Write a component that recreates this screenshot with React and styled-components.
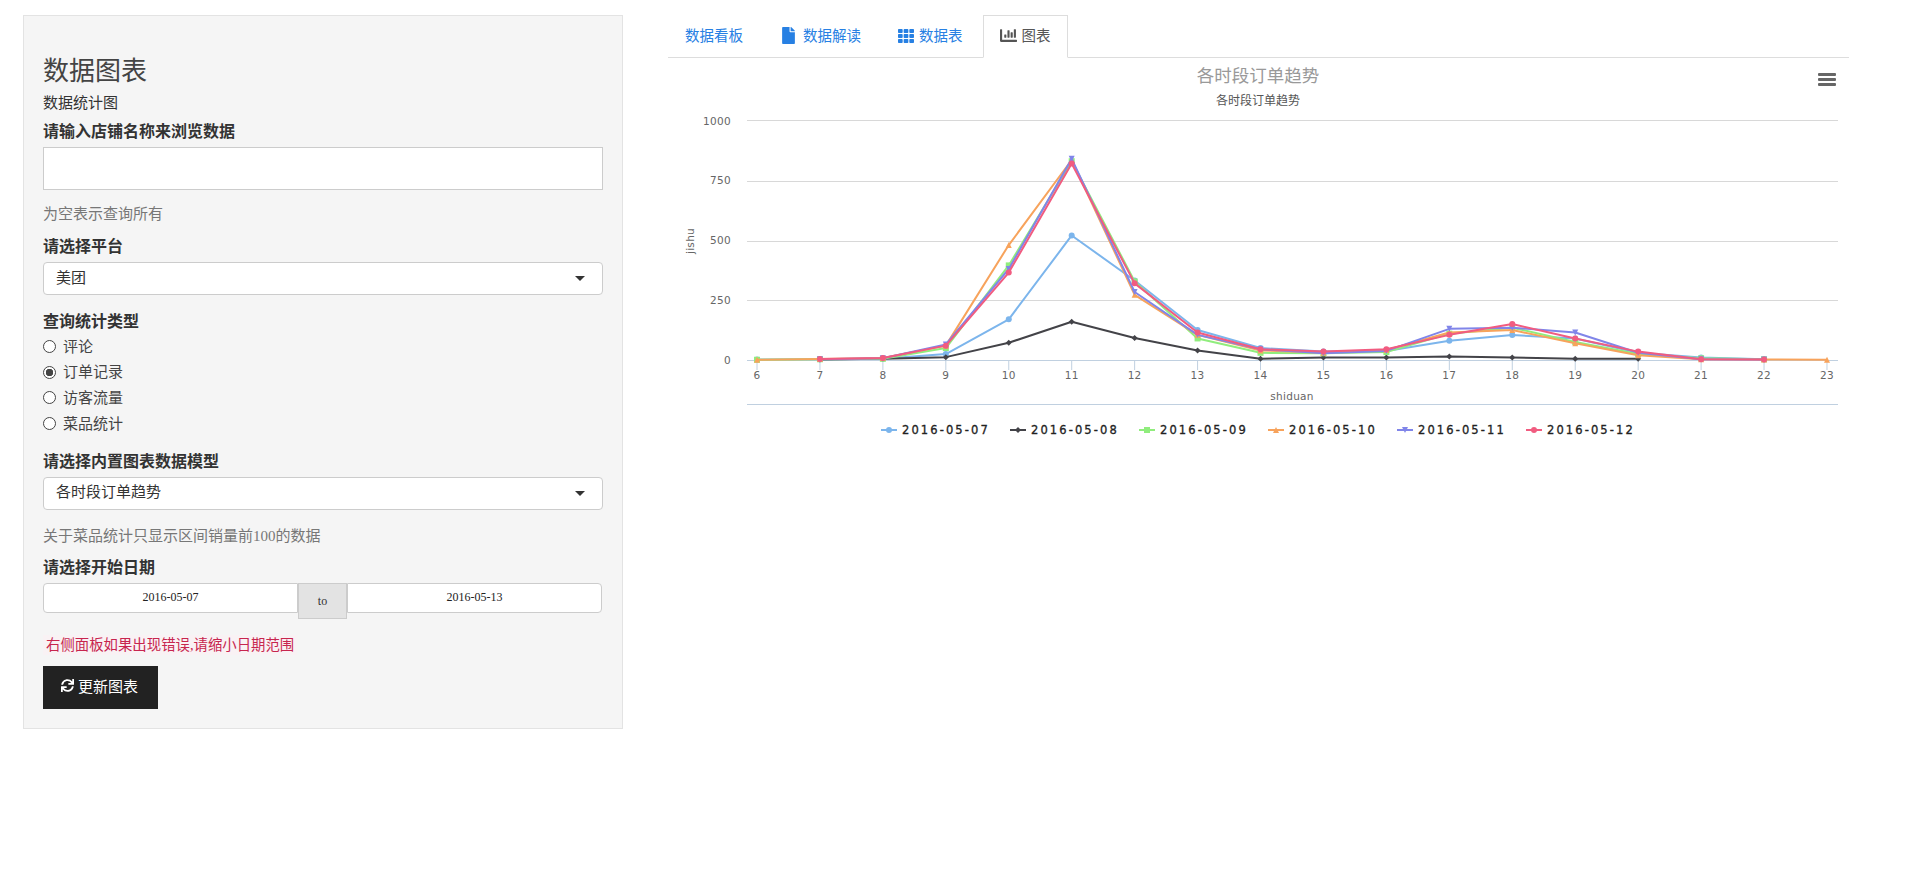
import React from "react"
import styled, { createGlobalStyle } from "styled-components"
import { FaFile, FaTh, FaChartBar, FaSync } from "react-icons/fa"

const GlobalStyle = createGlobalStyle`
  html, body {
    margin: 0;
    background: #fff;
  }
  body {
    font-family: "Liberation Serif", "Noto Sans CJK SC", serif;
    font-size: 15px;
    line-height: 20px;
    color: #333;
  }
`

const HOURS = [6, 7, 8, 9, 10, 11, 12, 13, 14, 15, 16, 17, 18, 19, 20, 21, 22, 23]

// values start at hour 6, a null means no order that hour
const SERIES = [
  {
    name: "2016-05-07",
    color: "#7cb5ec",
    marker: "circle",
    data: [2, 3, 5, 25, 170, 520, 332, 125, 50, 35, 38, 80, 104, 90, 30, 10, 3, null],
  },
  {
    name: "2016-05-08",
    color: "#434348",
    marker: "diamond",
    data: [null, 2, 5, 12, 72, 160, 92, 40, 5, 10, 10, 15, 10, 5, 5, null, null, null],
  },
  {
    name: "2016-05-09",
    color: "#90ed7d",
    marker: "square",
    data: [1, 3, 5, 50, 395, 830, 328, 90, 30, 28, 33, 110, 135, 75, 25, 7, 3, null],
  },
  {
    name: "2016-05-10",
    color: "#f7a35c",
    marker: "triangle",
    data: [1, 4, 8, 60, 480, 835, 272, 105, 40, 30, 42, 115, 125, 70, 20, 3, 2, 1],
  },
  {
    name: "2016-05-11",
    color: "#8085e9",
    marker: "triangle-down",
    data: [null, 3, 7, 65, 380, 840, 284, 105, 45, 28, 38, 130, 135, 115, 30, 3, 2, null],
  },
  {
    name: "2016-05-12",
    color: "#f15c80",
    marker: "circle",
    data: [null, 4, 8, 60, 365, 820, 320, 115, 45, 35, 45, 105, 150, 90, 35, 3, 2, null],
  },
]

const GRID = [
  { value: 1000, y: 120.5 },
  { value: 750, y: 181.5 },
  { value: 500, y: 241.5 },
  { value: 250, y: 300.5 },
  { value: 0, y: 360.5 },
]

const xOf = (i) => 757 + i * 62.94
const yOf = (v) => 360 - v * 0.2395

const Marker = ({ type, x, y, color }) => {
  if (type === "circle") return <circle cx={x} cy={y} r={3} fill={color} />
  if (type === "square") return <rect x={x - 3} y={y - 3} width={6} height={6} fill={color} />
  const points = {
    diamond: `${x},${y - 3} ${x + 3},${y} ${x},${y + 3} ${x - 3},${y}`,
    triangle: `${x},${y - 3} ${x + 3},${y + 3} ${x - 3},${y + 3}`,
    "triangle-down": `${x - 3},${y - 3} ${x + 3},${y - 3} ${x},${y + 3}`,
  }
  return <polygon points={points[type]} fill={color} />
}

const OrderChart = () => (
  <ChartSvg viewBox="668 58 1181 400" width="1181" height="400">
    <text x="1258" y="82" textAnchor="middle" fontSize="17.5" fill="#999" fontFamily='"Noto Sans CJK SC", sans-serif'>
      各时段订单趋势
    </text>
    <text x="1258" y="105" textAnchor="middle" fontSize="12" fill="#555" fontFamily='"Noto Sans CJK SC", sans-serif'>
      各时段订单趋势
    </text>
    <g fill="#666">
      <rect x="1818" y="73" width="18" height="3" rx="1" />
      <rect x="1818" y="78" width="18" height="3" rx="1" />
      <rect x="1818" y="83" width="18" height="3" rx="1" />
    </g>

    {GRID.map((g) => (
      <g key={g.value}>
        <line x1="747" x2="1838" y1={g.y} y2={g.y} stroke={g.value > 0 ? "#d8d8d8" : "#c0d0e0"} />
        <AxisText x="731" y={yOf(g.value) + 4} textAnchor="end">
          {g.value}
        </AxisText>
      </g>
    ))}
    <line x1="747" x2="1838" y1="404.5" y2="404.5" stroke="#c0d0e0" />

    {HOURS.map((h, i) => (
      <g key={h}>
        <line x1={xOf(i)} x2={xOf(i)} y1="360" y2="370" stroke="#c0d0e0" />
        <AxisText x={xOf(i)} y="379" textAnchor="middle">
          {h}
        </AxisText>
      </g>
    ))}
    <AxisText x="1292" y="400" textAnchor="middle">
      shiduan
    </AxisText>
    <AxisText x="694" y="241" textAnchor="middle" transform="rotate(-90 694 241)">
      jishu
    </AxisText>

    {SERIES.map((s) => {
      const pts = s.data
        .map((v, i) => (v === null ? null : [xOf(i), yOf(v)]))
        .filter(Boolean)
      return (
        <g key={s.name}>
          <polyline
            points={pts.map((p) => p.join(",")).join(" ")}
            fill="none"
            stroke={s.color}
            strokeWidth="2"
            strokeLinejoin="round"
          />
          {pts.map((p, i) => (
            <Marker key={i} type={s.marker} x={p[0]} y={p[1]} color={s.color} />
          ))}
        </g>
      )
    })}

    {SERIES.map((s, i) => {
      const left = 881 + i * 129
      return (
        <g key={s.name}>
          <line x1={left} x2={left + 16} y1="430" y2="430" stroke={s.color} strokeWidth="2" />
          <Marker type={s.marker} x={left + 8} y={430} color={s.color} />
          <LegendText x={left + 21} y="434">
            {s.name}
          </LegendText>
        </g>
      )
    })}
  </ChartSvg>
)

const App = () => (
  <Page>
    <GlobalStyle />
    <Well>
      <Heading>数据图表</Heading>
      <SubText>数据统计图</SubText>
      <FieldLabel $top={9}>请输入店铺名称来浏览数据</FieldLabel>
      <TextInput type="text" />
      <HelpText $top={14}>为空表示查询所有</HelpText>
      <FieldLabel $top={13}>请选择平台</FieldLabel>
      <SelectBox>
        <SelectValue>美团</SelectValue>
        <Caret />
      </SelectBox>
      <FieldLabel $top={17}>查询统计类型</FieldLabel>
      <RadioList>
        {["评论", "订单记录", "访客流量", "菜品统计"].map((label, i) => (
          <RadioRow key={label}>
            <Radio type="radio" name="kind" defaultChecked={i === 1} />
            {label}
          </RadioRow>
        ))}
      </RadioList>
      <FieldLabel $top={15.6}>请选择内置图表数据模型</FieldLabel>
      <SelectBox>
        <SelectValue>各时段订单趋势</SelectValue>
        <Caret />
      </SelectBox>
      <HelpText $top={16}>关于菜品统计只显示区间销量前100的数据</HelpText>
      <FieldLabel $top={12}>请选择开始日期</FieldLabel>
      <DateRange>
        <DateInput $side="left" defaultValue="2016-05-07" />
        <DateAddon>to</DateAddon>
        <DateInput $side="right" defaultValue="2016-05-13" />
      </DateRange>
      <ErrorHint>右侧面板如果出现错误,请缩小日期范围</ErrorHint>
      <UpdateButton>
        <FaSync size={13} />
        更新图表
      </UpdateButton>
    </Well>
    <Main>
      <TabBar>
        <Tab $gap={8}>数据看板</Tab>
        <Tab $gap={6}>
          <FaFile size={17} />
          数据解读
        </Tab>
        <Tab $gap={5}>
          <FaTh size={16} />
          数据表
        </Tab>
        <Tab $gap={5} $active>
          <FaChartBar size={17} />
          图表
        </Tab>
      </TabBar>
      <OrderChart />
    </Main>
  </Page>
)

export default App

const Page = styled.div`
  display: grid;
  grid-template-columns: 600px 1181px;
  column-gap: 45px;
  align-items: start;
  padding: 15px 0 0 23px;
`

const Well = styled.div`
  box-sizing: border-box;
  height: 714px;
  padding: 41px 19px 18px;
  background: #f5f5f5;
  border: 1px solid #e3e3e3;
`

const Heading = styled.h2`
  margin: 0;
  font-size: 26px;
  line-height: 30px;
  font-weight: 400;
  color: #444;
`

const SubText = styled.div`
  margin-top: 6px;
`

const FieldLabel = styled.label`
  display: block;
  margin: ${(p) => p.$top}px 0 5px;
  font-size: 16px;
  font-weight: 700;
`

const TextInput = styled.input`
  display: block;
  box-sizing: border-box;
  width: 100%;
  height: 43px;
  background: #fff;
  border: 1px solid #ccc;
  outline: none;
`

const HelpText = styled.div`
  margin-top: ${(p) => p.$top}px;
  color: #777;
`

const SelectBox = styled.div`
  display: flex;
  align-items: center;
  justify-content: space-between;
  box-sizing: border-box;
  height: 33px;
  padding: 0 17px 0 12px;
  background: #fff;
  border: 1px solid #ccc;
  border-radius: 4px;
`

const SelectValue = styled.span`
  padding-bottom: 2px;
`

const Caret = styled.span`
  width: 0;
  height: 0;
  border-style: solid;
  border-width: 5px 5px 0;
  border-color: #333 transparent transparent;
`

const RadioList = styled.div`
  display: flex;
  flex-direction: column;
  margin-top: -3px;
`

const RadioRow = styled.label`
  display: flex;
  align-items: center;
  gap: 7px;
  height: 25.6px;
  color: #444;
`

const Radio = styled.input`
  appearance: none;
  box-sizing: border-box;
  width: 13px;
  height: 13px;
  margin: 0;
  background: #fff;
  border: 1px solid #444;
  border-radius: 50%;
  &:checked {
    background: radial-gradient(circle, #444 0 3.5px, #fff 4px);
  }
`

const DateRange = styled.div`
  display: flex;
  align-items: flex-start;
  width: 559px;
  height: 36px;
`

const DateInput = styled.input`
  flex: 1;
  min-width: 0;
  box-sizing: border-box;
  height: 30px;
  padding: 0;
  font-family: "Liberation Serif", serif;
  font-size: 12px;
  color: #222;
  text-align: center;
  background: #fff;
  border: 1px solid #ccc;
  border-radius: ${(p) => (p.$side === "left" ? "4px 0 0 4px" : "0 4px 4px 0")};
  outline: none;
`

const DateAddon = styled.span`
  display: flex;
  align-items: center;
  justify-content: center;
  flex: none;
  box-sizing: border-box;
  width: 49px;
  height: 36px;
  font-size: 12px;
  background: #e3e3e3;
  border: 1px solid #ccc;
`

const ErrorHint = styled.code`
  display: block;
  width: fit-content;
  margin-top: 16px;
  padding: 0 3px;
  font-family: "Liberation Serif", "Noto Sans CJK SC", serif;
  font-size: 14.4px;
  color: #c7254e;
  background: #f9f2f4;
`

const UpdateButton = styled.button`
  display: flex;
  align-items: center;
  gap: 4px;
  box-sizing: border-box;
  width: 115px;
  height: 43px;
  margin-top: 11px;
  padding: 0 0 4px 18px;
  font-family: inherit;
  font-size: 15px;
  color: #fff;
  background: #222;
  border: none;
`

const Main = styled.div`
  display: flex;
  flex-direction: column;
`

const TabBar = styled.div`
  display: flex;
  gap: 3px;
  height: 43px;
  box-sizing: border-box;
  border-bottom: 1px solid #ddd;
`

const Tab = styled.div`
  display: flex;
  align-items: center;
  gap: ${(p) => p.$gap}px;
  box-sizing: border-box;
  height: 43px;
  padding: 0 16px 2px;
  font-size: 14.5px;
  color: ${(p) => (p.$active ? "#555" : "#2780e3")};
  background: ${(p) => (p.$active ? "#fff" : "transparent")};
  border: 1px solid ${(p) => (p.$active ? "#ddd" : "transparent")};
  border-bottom-color: ${(p) => (p.$active ? "#fff" : "transparent")};
`

const ChartSvg = styled.svg`
  display: block;
`

const AxisText = styled.text`
  font-family: "DejaVu Sans", sans-serif;
  font-size: 10.5px;
  letter-spacing: 0.3px;
  fill: #666;
`

const LegendText = styled.text`
  font-family: "DejaVu Sans", sans-serif;
  font-size: 11.5px;
  letter-spacing: 2.1px;
  fill: #222;
  stroke: #222;
  stroke-width: 0.3px;
`
